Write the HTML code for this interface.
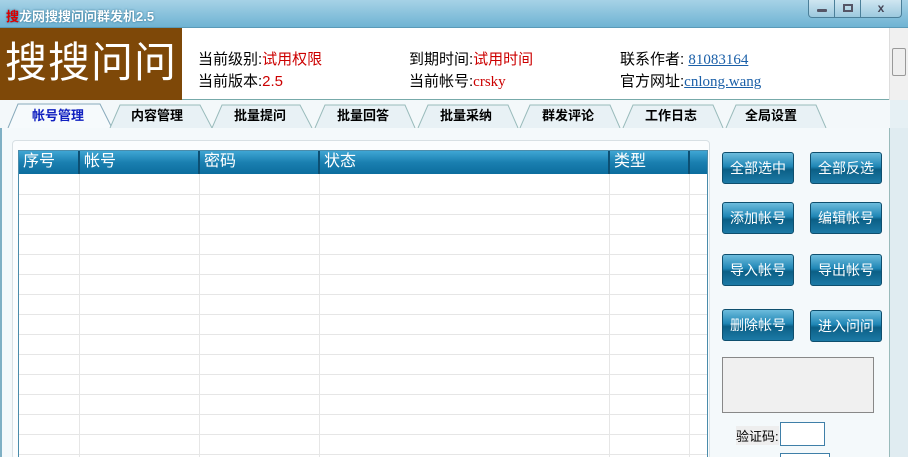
<!DOCTYPE html>
<html><head><meta charset="utf-8"><style>
*{margin:0;padding:0;box-sizing:border-box}
html,body{width:908px;height:457px;overflow:hidden}
body{background:#e6f0f4;font-family:"Liberation Sans","Noto Sans CJK SC",sans-serif;position:relative;font-size:14px}
.abs{position:absolute}
#title{left:0;top:0;width:908px;height:28px;background:linear-gradient(#a6d2e6,#6fb3d3);border-bottom:1px solid #5a9ab8}
#title .t{left:6px;top:6px;font-size:13px;font-weight:bold;color:#fff;text-shadow:0 0 2px #2a6a8a}
.wb{top:0;height:18px;border:1px solid #4b7f99;background:linear-gradient(#cfe6f1,#9cc9de);border-top:none}
#hdr{left:0;top:28px;width:890px;height:72px;background:#fff;border-bottom:1px solid #7aa}
#logo{left:0;top:28px;width:182px;height:72px;background:#7e4808;color:#fff;font-size:42px;line-height:70px;padding-left:5px;letter-spacing:1px}
.ln{font-size:15px;color:#000;white-space:nowrap}
.r{color:#c00}.u{color:#1a5fa8;text-decoration:underline;font-family:"Liberation Serif",serif}
#sb{left:889px;top:28px;width:19px;height:72px;background:#f0f0f0;border-left:1px solid #ddd}
.tab{top:104px;height:24px;font-size:13px;font-weight:bold;text-align:center;line-height:24px}
#panel{left:0;top:128px;width:890px;height:329px;background:#f4f9fb;border-left:2px solid #7fb0c4}
#frame{left:12px;top:140px;width:698px;height:320px;border:1px solid #d8e0e4;border-radius:4px;background:#fbfdfe}
#tbl{left:18px;top:150px;width:690px;height:310px;background:#fff;border:1px solid #4a8cab}
#th{left:0;top:0;width:688px;height:23px;background:linear-gradient(#3fa6d4,#1a7fb0 50%,#0c6d9e);}
.hc{top:0;height:23px;color:#fff;font-size:16px;line-height:22px;padding-left:4px;border-right:2px solid #0c4f73}
.btn{width:72px;height:32px;border:1px solid #0e4f6e;border-radius:3px;background:linear-gradient(#6dbcdc,#1f86b5 45%,#0b5f86 55%,#1c7aa6);color:#fff;font-size:14px;text-align:center;line-height:30px}
</style></head><body>
<div id="title" class="abs"><div class="t abs"><span style="color:#d00">搜</span>龙网搜搜问问群发机2.5</div>
<div class="wb abs" style="left:808px;width:27px;border-radius:0 0 0 4px"><div class="abs" style="left:8px;top:9px;width:10px;height:3px;background:#556;border-radius:1px"></div></div>
<div class="wb abs" style="left:834px;width:27px"><div class="abs" style="left:8px;top:4px;width:10px;height:8px;border:2px solid #556"></div></div>
<div class="wb abs" style="left:860px;width:42px;border-radius:0 0 4px 0;text-align:center;font-size:12px;font-weight:bold;color:#445;line-height:16px">x</div>
</div>
<div id="hdr" class="abs"></div>
<div id="logo" class="abs">搜搜问问</div>
<div class="abs ln" style="left:198px;top:48px">当前级别:<span class="r">试用权限</span></div>
<div class="abs ln" style="left:198px;top:70px">当前版本:<span class="r">2.5</span></div>
<div class="abs ln" style="left:409px;top:48px">到期时间:<span class="r">试用时间</span></div>
<div class="abs ln" style="left:409px;top:70px">当前帐号:<span class="r" style="font-family:'Liberation Serif',serif">crsky</span></div>
<div class="abs ln" style="left:620px;top:48px">联系作者: <span class="u">81083164</span></div>
<div class="abs ln" style="left:620px;top:70px">官方网址:<span class="u">cnlong.wang</span></div>
<div id="sb" class="abs"><div class="abs" style="left:2px;top:20px;width:14px;height:28px;border:1px solid #999;border-radius:2px;background:#eee"></div></div>
<svg class="abs" style="left:0;top:100px" width="890" height="30"><rect width="890" height="30" fill="#f3f8fa"/>
<path d="M8 28 L18 4 L100 4 L112 28" fill="#f6fafc" stroke="#8ab"/>
<g fill="#e8f1f5" stroke="#9bb"><path d="M110 28 L120 5 L200 5 L212 28"/><path d="M212 28 L222 5 L300 5 L312 28"/><path d="M315 28 L325 5 L405 5 L415 28"/><path d="M418 28 L428 5 L508 5 L518 28"/><path d="M520 28 L530 5 L610 5 L620 28"/><path d="M623 28 L633 5 L713 5 L723 28"/><path d="M726 28 L736 5 L816 5 L826 28"/></g></svg>
<div class="abs tab" style="left:18px;width:80px;color:#1020c0">帐号管理</div>
<div class="abs tab" style="left:117px;width:80px">内容管理</div>
<div class="abs tab" style="left:220px;width:80px">批量提问</div>
<div class="abs tab" style="left:323px;width:80px">批量回答</div>
<div class="abs tab" style="left:426px;width:80px">批量采纳</div>
<div class="abs tab" style="left:528px;width:80px">群发评论</div>
<div class="abs tab" style="left:631px;width:80px">工作日志</div>
<div class="abs tab" style="left:731px;width:80px">全局设置</div>
<div id="panel" class="abs"></div>
<div class="abs" style="left:889px;top:128px;width:19px;height:329px;background:#e0ecf1;border-left:1px solid #9bb"></div>
<div id="frame" class="abs"></div>
<div id="tbl" class="abs">
<svg class="abs" style="left:0;top:23px" width="688" height="290"><g stroke="#e6e6e6">
<path d="M0 20.5H688M0 40.5H688M0 60.5H688M0 80.5H688M0 100.5H688M0 120.5H688M0 140.5H688M0 160.5H688M0 180.5H688M0 200.5H688M0 220.5H688M0 240.5H688M0 260.5H688M0 280.5H688"/>
<path d="M60.5 0V290M180.5 0V290M300.5 0V290M590.5 0V290M670.5 0V290"/></g></svg>
<div id="th" class="abs">
<div class="abs hc" style="left:0;width:61px">序号</div>
<div class="abs hc" style="left:61px;width:120px">帐号</div>
<div class="abs hc" style="left:181px;width:120px">密码</div>
<div class="abs hc" style="left:301px;width:290px">状态</div>
<div class="abs hc" style="left:591px;width:80px">类型</div>
</div></div>
<div class="abs btn" style="left:722px;top:152px">全部选中</div>
<div class="abs btn" style="left:810px;top:152px">全部反选</div>
<div class="abs btn" style="left:722px;top:202px">添加帐号</div>
<div class="abs btn" style="left:810px;top:202px">编辑帐号</div>
<div class="abs btn" style="left:722px;top:254px">导入帐号</div>
<div class="abs btn" style="left:810px;top:254px">导出帐号</div>
<div class="abs btn" style="left:722px;top:309px">删除帐号</div>
<div class="abs btn" style="left:810px;top:310px">进入问问</div>
<div class="abs" style="left:722px;top:357px;width:152px;height:56px;background:#f0f0f0;border:1px solid #888"></div>
<div class="abs" style="left:736px;top:426px;font-size:13px;background:#eee">验证码:</div>
<div class="abs" style="left:780px;top:422px;width:45px;height:24px;background:#fff;border:1px solid #3f7fa8"></div>
<div class="abs" style="left:780px;top:453px;width:50px;height:6px;background:#fff;border:1px solid #3f7fa8"></div>
</body></html>
